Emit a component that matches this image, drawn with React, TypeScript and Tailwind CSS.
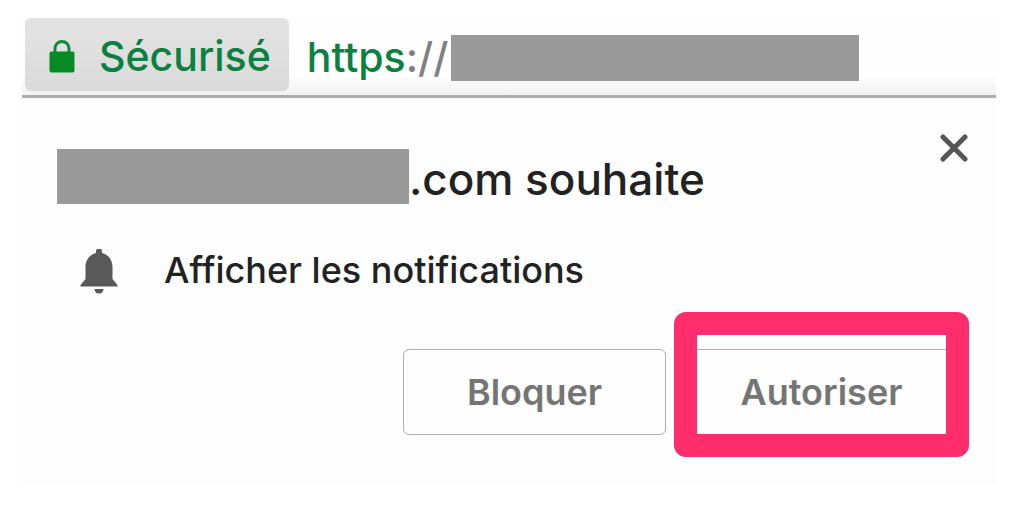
function LockIcon() {
  return (
    <svg viewBox="0 0 26 33" className="h-[33px] w-[26px]" aria-hidden="true">
      <path d="M6 13V8.500a7 7 0 0 1 14 0V13" fill="none" stroke="#0b8a2e" strokeWidth="3" />
      <rect x="0.500" y="11.500" width="25" height="21" rx="2" fill="#058a24" />
    </svg>
  );
}

function BellIcon() {
  return (
    <svg viewBox="0 0 38 46" className="h-[46px] w-[38px]" fill="#595959" aria-hidden="true">
      <path d="M16 4V2.500a3 3 0 0 1 6 0V4c6.500 1.500 10.500 7 10.500 14v12l5 6v1.500h-37V36l5-6V18C5.500 11 9.500 5.500 16 4z" />
      <path d="M14.500 40h9a4.500 4.500 0 0 1-9 0z" />
    </svg>
  );
}

function CloseIcon() {
  return (
    <svg viewBox="0 0 28 28" className="size-7" aria-hidden="true">
      <path d="M3 3l22 22M25 3l-22 22" stroke="#555" strokeWidth="5" strokeLinecap="round" />
    </svg>
  );
}

export default function App() {
  return (
    <div className="min-h-screen bg-white pt-[15px] pr-7 pb-8 pl-[22px] font-['Inter',sans-serif]">
      {/* Address bar */}
      <header className="flex items-center border-b-[3px] border-[#adadad] bg-linear-to-b from-[#fefefe] from-75% to-[#f1f1f1] p-[3px] pb-1">
        <button
          type="button"
          className="flex h-[73px] items-center gap-6 rounded-md bg-linear-to-b from-[#e3e3e3] to-[#dadada] pt-1 pr-[18px] pl-6 text-[41px] font-medium text-[#0b8040]"
        >
          <LockIcon />
          Sécurisé
        </button>
        <div className="flex flex-1 items-center gap-[3px] pt-1.5 pl-[18px] text-[41px] font-medium text-[#0b8040]">
          <span>
            https<span className="text-[#808080]">://</span>
          </span>
          <span className="h-[46px] w-[408px] bg-[#999999]" />
        </div>
      </header>

      {/* Permission prompt */}
      <main className="bg-[#fdfdfd] pr-[43px] pb-[50px] pl-[35px]">
        <div className="flex items-start justify-between pt-9">
          <h1 className="flex items-start pt-[15px] text-[44px] leading-[55px] font-medium text-[#222]">
            <span className="h-[55px] w-[352px] bg-[#999999]" />
            <span className="pt-[3px]">.com souhaite</span>
          </h1>
          <button type="button" aria-label="Fermer" className="-mr-[15px]">
            <CloseIcon />
          </button>
        </div>

        <div className="flex items-center gap-[46px] pt-10 pl-[23px] text-[36px] leading-[46px] font-medium text-[#222]">
          <BellIcon />
          <p className="pb-1">Afficher les notifications</p>
        </div>

        <div className="flex justify-end gap-6 pt-[52px] text-[36px] font-semibold text-[#757575]">
          <button type="button" className="h-[86px] w-[263px] rounded-md border border-[#b0b0b0]">
            Bloquer
          </button>
          <div className="relative">
            <button type="button" className="h-[86px] w-[263px] rounded-md border border-[#b0b0b0]">
              Autoriser
            </button>
            {/* Highlight around the allow button */}
            <div className="pointer-events-none absolute -inset-x-4 -top-[37px] -bottom-[22px] rounded-xl border-[23px] border-[#ff2d6c]" />
          </div>
        </div>
      </main>
    </div>
  );
}
